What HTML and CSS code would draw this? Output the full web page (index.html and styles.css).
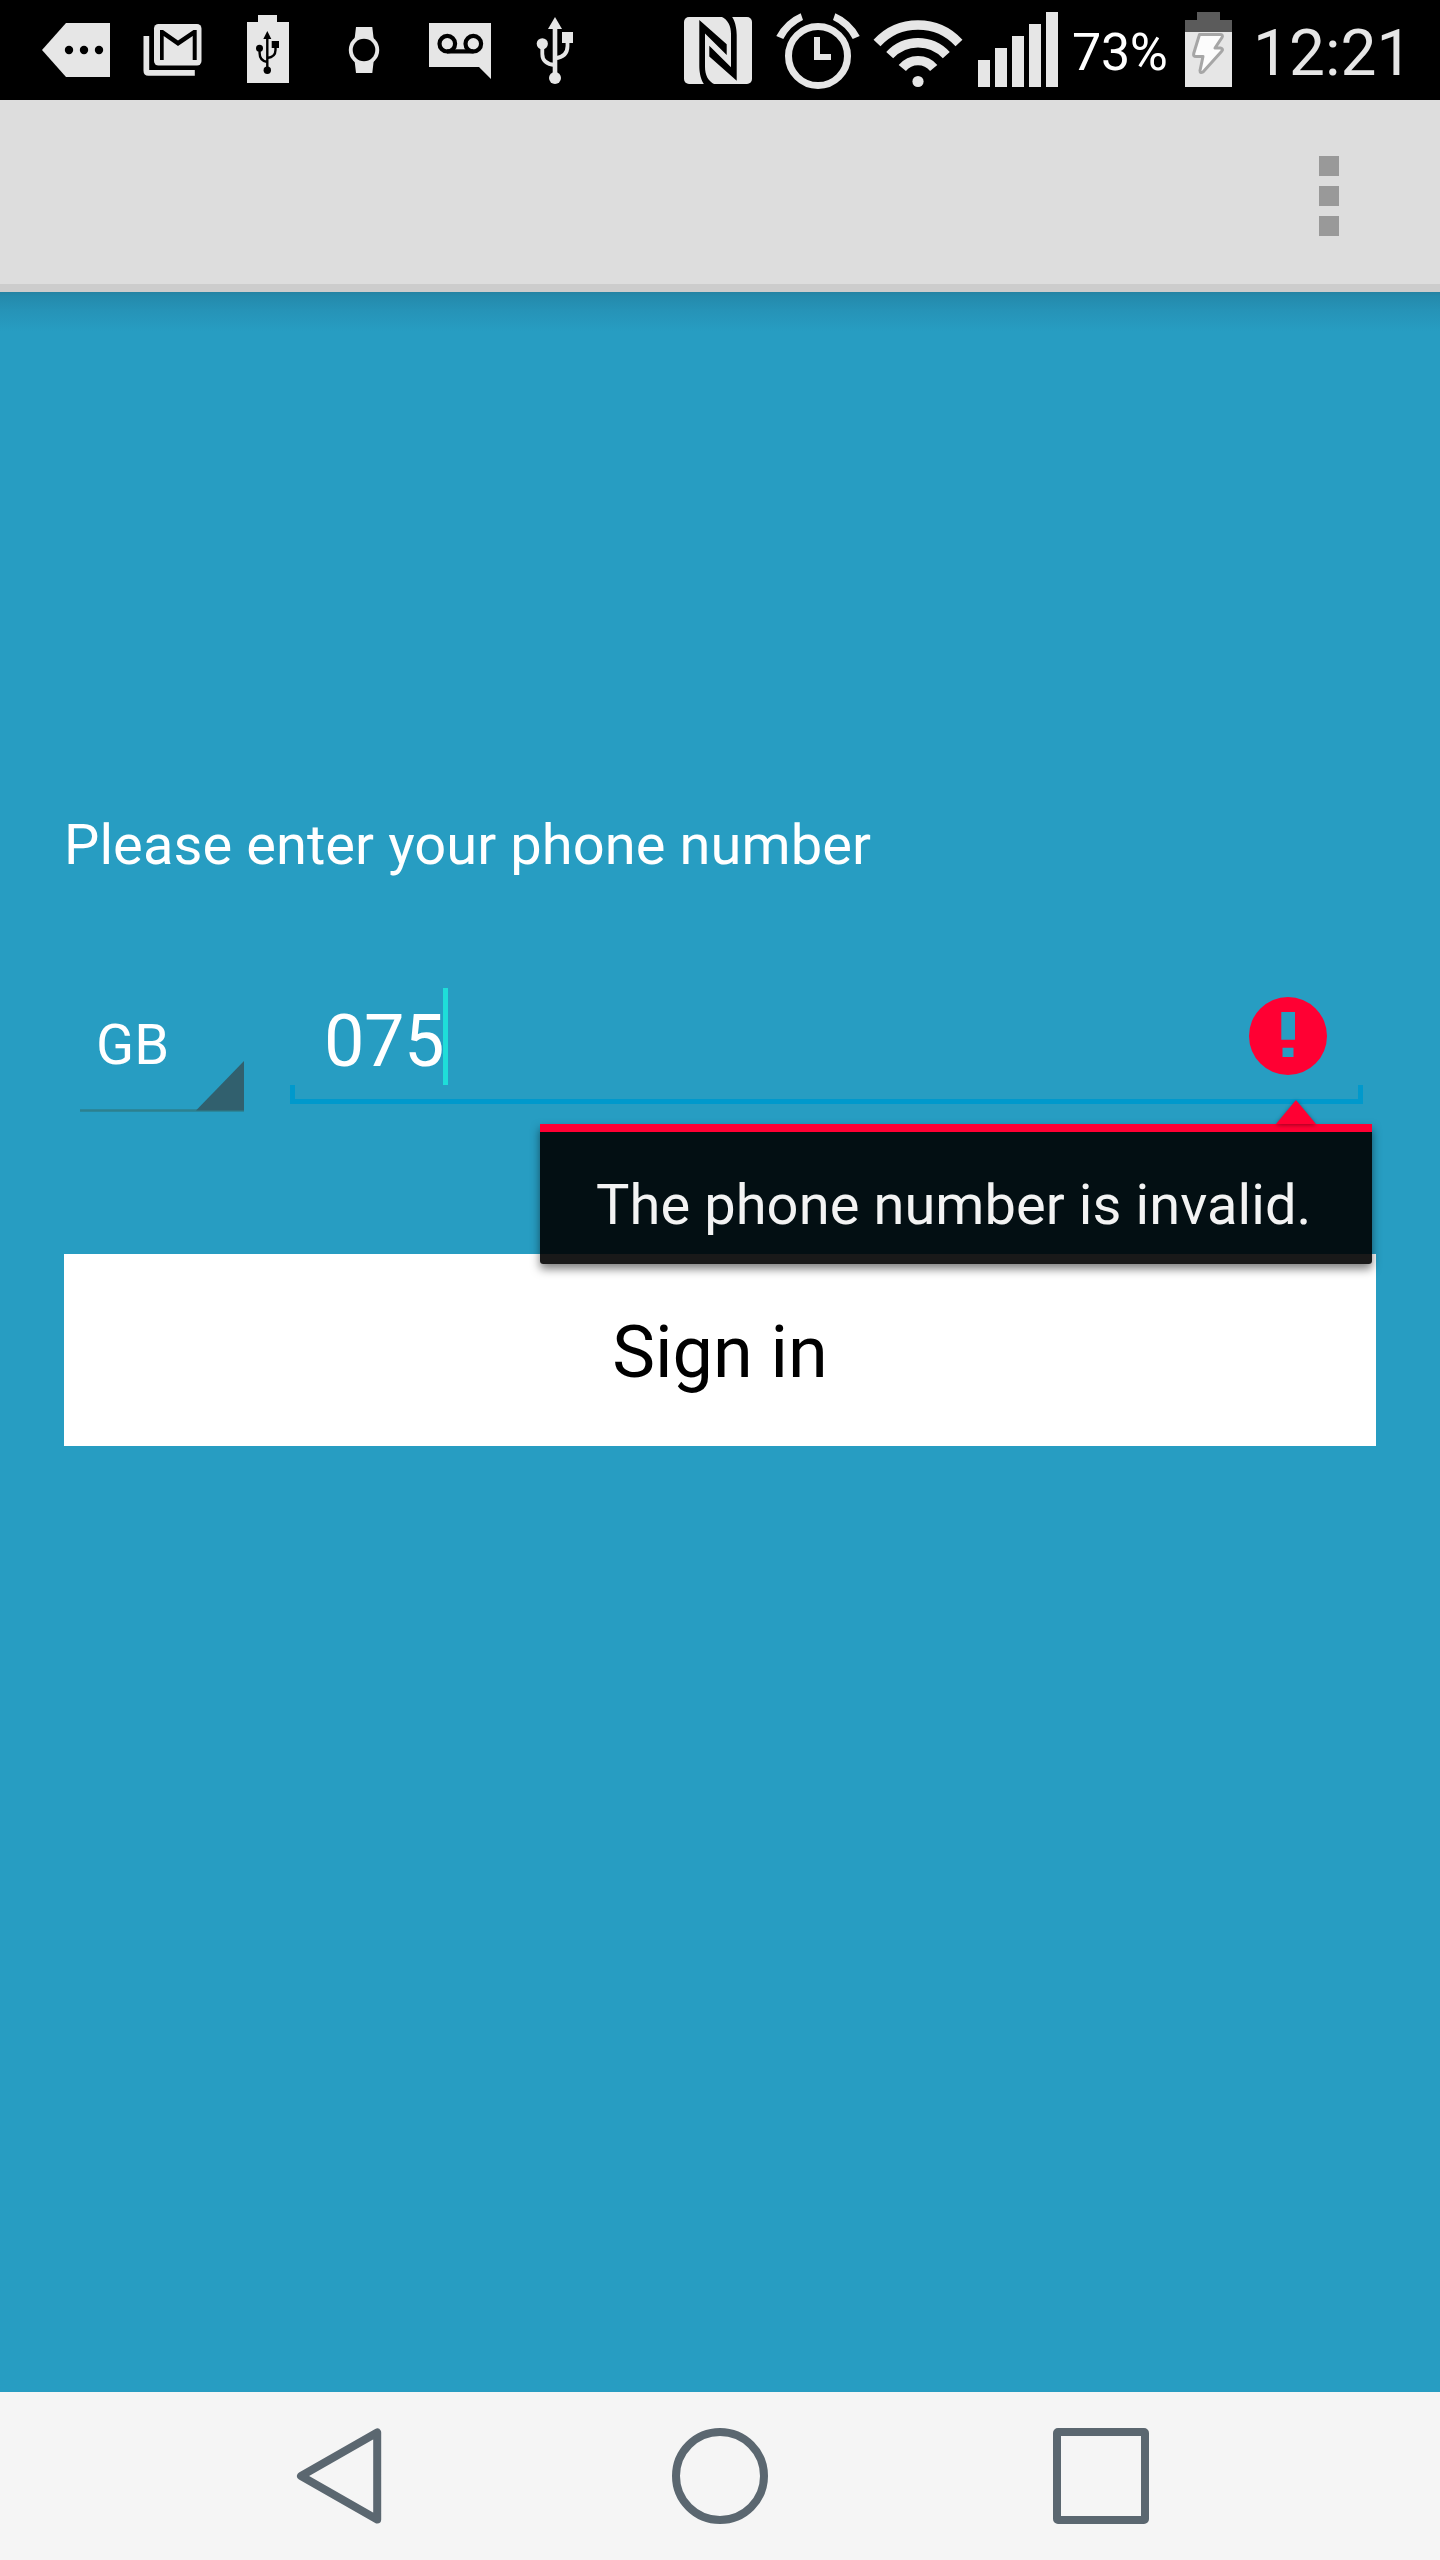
FILE: index.html
```html
<!DOCTYPE html>
<html lang="en">
<head>
<meta charset="utf-8">
<title>Sign in</title>
<link rel="stylesheet" href="styles.css">
</head>
<body>
<div class="phone">
  <header class="status">
    <div class="status-left">
      <svg class="slot" viewBox="32 0 96 100"><path d="M42 50 66 23h44v54H66z"/><g fill="#000"><circle cx="69" cy="50" r="4.2"/><circle cx="84" cy="50" r="4.2"/><circle cx="99" cy="50" r="4.2"/></g></svg>
      <svg class="slot" viewBox="128 0 96 100"><rect x="154" y="24" width="47.5" height="41.5" rx="4.5"/><path d="M143.5 36h5.7v34h45.6v5.7h-46.3q-5 0-5-5z"/><path fill="#000" d="M160 30h3l15 10.5L193.5 30h3.2v30h-4V36L178 46l-14.3-10v24H160z"/></svg>
      <svg class="slot" viewBox="224 0 96 100"><path d="M258 15h19v7h12v61h-42V22h11z"/><g fill="#000"><path d="M267.3 31l4 8h-8z"/><circle cx="267.3" cy="70.3" r="3.7"/><circle cx="259.5" cy="48.3" r="3.5"/><path d="M271.7 41h7.3v7h-7.3z"/></g><path fill="none" stroke="#000" stroke-width="2.4" d="M267.3 36v34M259.6 48v5q0 8 7.7 9M275.5 47v3q0 7-8.2 8"/></svg>
      <svg class="slot" viewBox="320 0 96 100"><path d="M356 27h16.3l1.5 13h-19.3zM356 73h16.3l1.5-13h-19.3z"/><circle cx="364" cy="50" r="15.2"/><circle cx="364" cy="50" r="11.3" fill="#000"/></svg>
      <svg class="slot" viewBox="416 0 96 100"><path d="M429 23h62v56l-12-12h-50z"/><g fill="none" stroke="#000" stroke-width="4.2"><circle cx="447.3" cy="43.7" r="7.8"/><circle cx="473.3" cy="43.7" r="7.8"/><path d="M447 51.4h26.5"/></g></svg>
      <svg class="slot" viewBox="512 0 96 100"><path d="M555 17l7 12h-14z"/><circle cx="555" cy="78" r="6"/><circle cx="542.3" cy="43.8" r="5.6"/><path d="M562 32h11v11h-11z"/><path class="line" stroke-width="4.6" d="M555 25v50"/><path class="line" stroke-width="3.8" d="M542.3 46v8q0 10 12.7 11M567.5 42v4q0 11-12.5 12.3"/></svg>
    </div>
    <div class="status-right">
      <svg width="92" height="100" viewBox="672 0 92 100"><rect x="684" y="17" width="68" height="67" rx="5"/><path fill="#000" d="M699.3 20l27.4 24.3V55L705 33.5v33.2c0 8.3 3 14.3 9.5 17.6H704c-4-6-4.7-14.3-4.7-18.3zM736.7 80.8l-27.4-24.3V45.8L731 67.3V34c0-8.2-3-14.2-9.5-17.3H732c4 6 4.7 14.3 4.7 18.1z"/></svg>
      <svg width="104" height="100" viewBox="764 0 104 100"><circle class="line" cx="818" cy="56" r="29.5" stroke-width="7"/><path d="M814 37h6v17h11v6h-17zM776.3 36Q785 20 800.7 13.3L803 20Q790 26 783.3 39zM859.7 36Q851 20 835.3 13.3L833 20Q846 26 852.7 39z"/></svg>
      <svg width="102" height="100" viewBox="868 0 102 100"><g class="line" stroke-width="9.4"><path d="M877 43A55.7 55.7 0 0 1 959 43"/><path d="M889.7 55.2A38.3 38.3 0 0 1 946.3 55.2"/><path d="M902.3 68A20.4 20.4 0 0 1 933.7 68"/></g><circle cx="918" cy="81.5" r="5.6"/></svg>
      <svg width="104" height="100" viewBox="970 0 104 100"><path d="M978 60h12v27h-12zM995 48h12v39h-12zM1012 36h12v51h-12zM1029 24h12v63h-12zM1046 12h12v75h-12z"/></svg>
      <span class="percent">73%</span>
      <svg width="64" height="100" viewBox="1176 0 64 100"><path fill="#5b5b5b" d="M1197 12h23v8h12v12h-47V20h12z"/><path d="M1185 32h47v55h-47z"/><path fill="#fcfcfc" stroke="#a6a6a6" stroke-width="3" stroke-linejoin="round" d="M1199.5 34.5h20.500q3.500 0 2 3l-7 10.500h5.500q3.500 1 1 3.500l-18.500 20.500q-3 1.500-3-1.500l3-14h-7q-3 0-2.300-3z"/></svg>
      <span class="clock">12:21</span>
    </div>
  </header>
  <nav class="appbar">
    <div class="overflow"><i></i><i></i><i></i></div>
  </nav>
  <main class="content">
    <label class="prompt">Please enter your phone number</label>
    <div class="fields">
      <div class="spinner">
        <span>GB</span>
        <svg class="spinner-line" viewBox="0 0 164 52"><path fill="#2d808f" d="M0 48.300h164v2.400H0z"/><path fill="#31606e" d="M164 0v49.500H116z"/></svg>
      </div>
      <div class="number">
        <span class="digits">075</span><span class="cursor"></span>
        <svg class="error-icon" viewBox="0 0 78 78"><path fill="#ff0033" fill-rule="evenodd" d="M39 0a39 39 0 1 1 0 78a39 39 0 1 1 0-78zM32.300 15v27.700h13.700V15zM33.500 50.700v9.300h11v-9.300z"/></svg>
        <div class="bracket"></div>
        <div class="popup">
          <svg class="pointer" viewBox="0 0 40 24"><path fill="#ff0033" d="M20 0l20 24H0z"/></svg>
          The phone number is invalid.
        </div>
      </div>
    </div>
    <button class="signin">Sign in</button>
  </main>
  <footer class="navbar">
    <svg viewBox="0 0 96 96"><path d="M86.200 4.500v87L10 48z" stroke-linejoin="round"/></svg>
    <svg viewBox="0 0 96 96"><circle cx="48" cy="48" r="44"/></svg>
    <svg viewBox="0 0 96 96"><rect x="4" y="4" width="88" height="88" rx="1"/></svg>
  </footer>
</div>
</body>
</html>
```
FILE: styles.css
```css
* { box-sizing: border-box; }
body { margin: 0; font-family: Roboto, "Noto Sans", sans-serif; }
svg { display: block; flex: none; }

.phone { width: 1440px; height: 2560px; display: flex; flex-direction: column; overflow: hidden; background: #279dc2; }

.status { height: 100px; flex: none; display: flex; justify-content: space-between; background: #000; color: #e6e6e6; }
.status svg { fill: #e6e6e6; }
.status .line { fill: none; stroke: #e6e6e6; }
.status-left { display: flex; padding-left: 32px; }
.slot { width: 96px; height: 100px; }
.status-right { display: flex; width: 768px; }
.percent { width: 102px; margin-left: -2px; margin-right: 2px; color: #fff; font-size: 52px; line-height: 106px; letter-spacing: -.3px; white-space: nowrap; }
.clock { padding-left: 13px; font-size: 64px; line-height: 108px; white-space: nowrap; }

.appbar { height: 192px; flex: none; display: flex; justify-content: flex-end; padding: 56px 101px 0 0; background: #ddd; border-bottom: 8px solid #ccc; }
.overflow { display: flex; flex-direction: column; gap: 10px; }
.overflow i { width: 20.5px; height: 20px; background: #999; }

.content { flex: 1; padding: 520px 64px 0; display: flex; flex-direction: column; background: linear-gradient(#2482a2 0, #248aac 4px, #2693b7 18px, #279dc2 40px); }
.prompt { height: 66px; font-size: 56px; line-height: 66px; letter-spacing: .08px; color: #fff; white-space: nowrap; }
.fields { margin-top: 98px; height: 278px; display: flex; }
.spinner { width: 164px; margin-left: 16px; padding-top: 36px; color: #fff; font-size: 56px; line-height: 66px; }
.spinner span { display: block; height: 49px; padding-left: 16px; }
.spinner-line { width: 164px; height: 52px; }
.number { position: relative; width: 1073px; height: 128px; margin-left: 46px; padding: 12px 36px 0 34px; display: flex; color: #fff; }
.digits { width: 119px; font-size: 72px; line-height: 107px; letter-spacing: -.5px; }
.cursor { width: 5px; height: 97px; background: #1eded9; }
.error-icon { width: 78px; height: 78px; margin: 9px .5px 0 auto; }
.bracket { position: absolute; left: 0; bottom: 0; width: 100%; height: 19px; border: solid #0099cc; border-width: 0 5px 5px; }
.popup { position: absolute; left: 250px; top: 148px; width: 832px; height: 140px; padding-left: 56px; border-top: 8px solid #f03; border-radius: 0 0 3px 3px; background: rgba(0, 0, 0, .9); background-clip: padding-box; box-shadow: 0 5px 10px rgba(0, 0, 0, .5); color: #f3f3f3; font-size: 56px; line-height: 146px; letter-spacing: .08px; white-space: nowrap; z-index: 1; }
.pointer { position: absolute; right: 56px; top: -32px; width: 40px; height: 24px; filter: drop-shadow(0 1px 2px rgba(0, 0, 0, .4)); }
.signin { height: 192px; flex: none; padding: 6px 0 0; border: 0; background: #fff; color: #000; font: 72px/186px Roboto, "Noto Sans", sans-serif; }

.navbar { height: 168px; flex: none; display: flex; justify-content: space-between; align-items: center; padding: 0 291px; background: #f5f5f5; }
.navbar svg { width: 96px; height: 96px; fill: none; stroke: #5b6770; stroke-width: 8px; }
```
